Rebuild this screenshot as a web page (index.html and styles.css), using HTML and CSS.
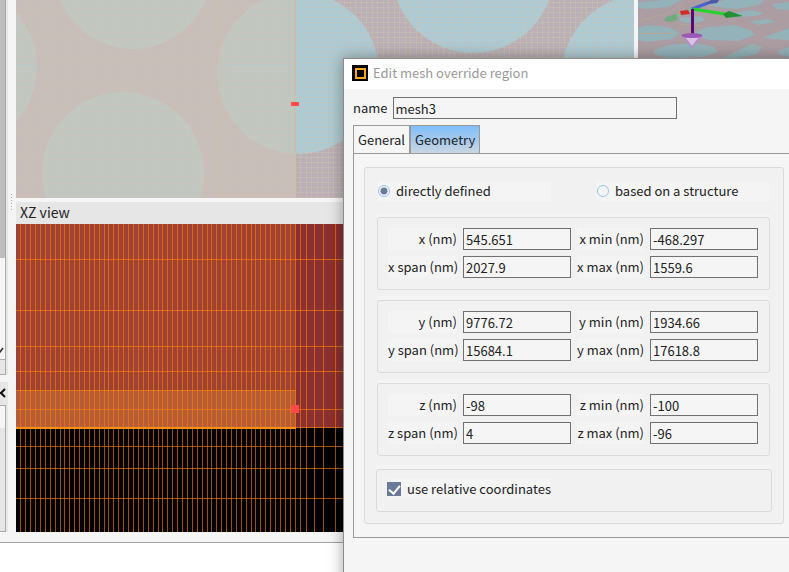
FILE: index.html
```html
<!DOCTYPE html>
<html lang="en">
<head>
<meta charset="utf-8">
<title>Edit mesh override region</title>
<link rel="stylesheet" href="styles.css">
</head>
<body>
<div class="app">
  <main class="workspace">
    <aside class="dock">
      <div class="dock-scroll"></div>
      <div class="dock-list"><svg width="5" height="10" viewBox="0 0 5 10"><path d="M-2 4L0 7L3 3" fill="none" stroke="#222" stroke-width="1.5"/></svg></div>
      <div class="dock-corner"></div>
      <div class="dock-title"><svg width="6" height="10" viewBox="0 0 6 10"><path d="M5 1L1 5L5 9M1 5L-2 5" fill="none" stroke="#111" stroke-width="2"/></svg></div>
      <div class="dock-field"></div>
      <div class="dock-body"></div>
    </aside>
    <div class="splitter"><span class="grip"></span></div>
    <section class="views">
      <div class="view-top">
        <svg class="scene" aria-label="XY view">
          <defs>
            <pattern id="fine" width="10" height="12" patternUnits="userSpaceOnUse">
              <path d="M4.500 0V12M9.500 0V12M0 3.500H10M0 8.500H10" stroke="#ccc0b4" stroke-opacity=".35"/>
            </pattern>
            <pattern id="coarse" width="11" height="5" patternUnits="userSpaceOnUse">
              <path d="M4.500 0V5M9.500 0V5M0 2.500H11" stroke="#cbc2ae" stroke-opacity=".5"/>
            </pattern>
            <clipPath id="meshed"><rect width="280" height="198"/></clipPath>
            <clipPath id="open"><rect x="280" width="2000" height="198"/></clipPath>
            <g id="discs">
              <circle cx="117" cy="-29" r="78"/><circle cx="107" cy="173" r="81"/>
              <circle cx="-60" cy="67" r="81"/><circle cx="282" cy="73" r="81"/>
              <circle cx="457" cy="-28" r="81"/><circle cx="629" cy="78" r="84"/>
            </g>
          </defs>
          <rect width="100%" height="100%" fill="#bbb0b6"/>
          <rect width="280" height="198" fill="#c7beb9"/>
          <use href="#discs" fill="#c1c8c1" clip-path="url(#meshed)"/>
          <use href="#discs" fill="#abcbd6" clip-path="url(#open)"/>
          <rect width="280" height="198" fill="url(#fine)"/>
          <rect x="280" width="100%" height="100%" fill="url(#coarse)"/>
          <path d="M279 0V198" stroke="#cbc0ae" stroke-width="2"/>
          <path d="M205.500 0V198" stroke="#cbc1ae" stroke-opacity=".5" stroke-width="2"/>
          <path d="M0 64.500H21M212 64.500H276" stroke="#b0c7cd" stroke-opacity=".7"/>
          <rect x="275" y="102" width="8" height="4" fill="#ff4a4a"/>
        </svg>
      </div>
      <h2 class="view-title">XZ view</h2>
      <div class="view-xz">
        <svg class="scene" aria-label="XZ view">
          <rect width="100%" height="100%" fill="#000"/>
          <rect width="100%" height="204" fill="#8b3031"/>
          <rect width="280" height="204" fill="#9f4234"/>
          <rect y="166" width="280" height="38" fill="#b65c37"/>
          <path stroke="#ff8000" stroke-opacity=".62" d="M4.500 0v308m5-308v308m5-308v308m5-308v308m5-308v308m5-308v308m5-308v308m5-308v308m5-308v308m4-308v308m5-308v308m5-308v308m5-308v308m5-308v308m5-308v308m5-308v308m5-308v308m5-308v308m4-308v308m5-308v308m5-308v308m5-308v308m5-308v308m5-308v308m5-308v308m5-308v308m5-308v308m5-308v308m5-308v308m4-308v308m5-308v308m5-308v308m5-308v308m5-308v308m5-308v308m5-308v308m5-308v308m5-308v308m5-308v308m4-308v308m5-308v308m5-308v308m5-308v308m5-308v308m5-308v308m5-308v308m5-308v308m5-308v308m4-308v308m5-308v308m5-308v308m5-308v308m5-308v308m5-308v308m5-308v308m5-308v308m5-308v308m5-308v308m6-308v308m8-308v308m9-308v308m12-308v308"/>
          <path stroke="#ff8000" stroke-opacity=".65" d="M0 35.500h800M0 86.500h800M0 122.500h800M0 147.500h800M0 166.500h280M0 185.500h800M0 203.500h800M0 222.500h800M0 244.500h800M0 274.500h800"/>
          <path d="M0 204H280" stroke="#ff9010" stroke-width="2"/>
          <rect x="275" y="181" width="8" height="8" fill="#ff4848"/>
        </svg>
      </div>
    </section>
    <section class="perspective">
      <svg class="scene" aria-label="Perspective view">
        <rect width="100%" height="100%" fill="#ab9da2"/>
        <g fill="#94b2b9">
          <path d="M0 2L26 0H44L30 7L8 9L0 8ZM0 28L10 25L30 27L42 33L34 39L8 42L0 40ZM57 32L70 27L96 25L112 30L117 35L100 41L72 40L58 37ZM70 6L86 0H126L122 5L98 9ZM96 13L112 10L126 13L118 16L100 17ZM124 38L151 28V40ZM15 51L30 45L56 43L76 47L80 52L64 57L30 58L18 55ZM84 58L114 44L124 47L119 54L100 58ZM140 51L151 47V57L142 55ZM40 18L62 16L68 20L55 24L44 22ZM134 4L151 2V10L138 9ZM112 21L130 19L139 22L120 25Z"/>
        </g>
        <path d="M0 21L28 14L46 3M0 33.500H36M40 24L66 26" stroke="#b5a696" fill="none"/>
        <path d="M28 17L38 14L40 19L34 22L26 21Z" fill="#70aa7e"/>
        <path d="M39 16L54 9" stroke="#7fc486" stroke-width="2"/>
        <path d="M42 11L50 10L52 14L43 15Z" fill="#d32a2a"/>
        <path d="M54 9L70 3" stroke="#4964d0" stroke-width="3"/>
        <path d="M68 3L73 0H81L79 3L71 4Z" fill="#4859ae"/>
        <path d="M55 9L86 14" stroke="#22d52a" stroke-width="3"/>
        <path d="M85 14L91 11L105 16L88 18Z" fill="#219332"/>
        <path d="M54.500 9V36" stroke="#5b086f" stroke-width="3"/>
        <path d="M44 36L54 48L65 36Z" fill="#b98acb"/>
        <path d="M48 38L54 46L60 38Z" fill="#dcc4e6"/>
        <ellipse cx="54" cy="35.500" rx="10.500" ry="2.500" fill="#9a5ab6"/>
      </svg>
    </section>
  </main>
  <footer class="output"></footer>
</div>

<div class="dialog" role="dialog" aria-labelledby="dialog-title">
  <header class="titlebar">
    <svg width="16" height="16" viewBox="0 0 16 16"><rect width="16" height="16"/><rect x="4" y="4" width="9" height="9" fill="#000" stroke="#f5a81c" stroke-width="2"/></svg>
    <h1 id="dialog-title">Edit mesh override region</h1>
  </header>
  <form class="form">
    <div class="name-row">
      <label for="name">name</label>
      <input class="field" id="name" type="text" value="mesh3">
    </div>
    <div class="tabs" role="tablist">
      <button class="tab" type="button" role="tab" aria-selected="false">General</button>
      <button class="tab tab-active" type="button" role="tab" aria-selected="true">Geometry</button>
    </div>
    <div class="page" role="tabpanel">
      <div class="group">
        <div class="modes">
          <label class="option"><input type="radio" name="mode" checked>directly defined</label>
          <label class="option"><input type="radio" name="mode">based on a structure</label>
        </div>
        <div class="axes">
          <div class="axis">
            <label for="x">x (nm)</label><input class="field" id="x" type="text" value="545.651">
            <label for="xmin">x min (nm)</label><input class="field" id="xmin" type="text" value="-468.297">
            <label for="xspan">x span (nm)</label><input class="field" id="xspan" type="text" value="2027.9">
            <label for="xmax">x max (nm)</label><input class="field" id="xmax" type="text" value="1559.6">
          </div>
          <div class="axis">
            <label for="y">y (nm)</label><input class="field" id="y" type="text" value="9776.72">
            <label for="ymin">y min (nm)</label><input class="field" id="ymin" type="text" value="1934.66">
            <label for="yspan">y span (nm)</label><input class="field" id="yspan" type="text" value="15684.1">
            <label for="ymax">y max (nm)</label><input class="field" id="ymax" type="text" value="17618.8">
          </div>
          <div class="axis">
            <label for="z">z (nm)</label><input class="field" id="z" type="text" value="-98">
            <label for="zmin">z min (nm)</label><input class="field" id="zmin" type="text" value="-100">
            <label for="zspan">z span (nm)</label><input class="field" id="zspan" type="text" value="4">
            <label for="zmax">z max (nm)</label><input class="field" id="zmax" type="text" value="-96">
          </div>
        </div>
        <div class="relative">
          <label class="check"><input type="checkbox" checked>use relative coordinates</label>
        </div>
      </div>
    </div>
  </form>
</div>
</body>
</html>
```
FILE: styles.css
```css
* { box-sizing: border-box; }

html, body { height: 100%; }

body {
  margin: 0;
  overflow: hidden;
  background: #fff;
  color: #222;
  font: 13px/20px "Noto Sans CJK SC", "Noto Sans", sans-serif;
}

h1, h2 { margin: 0; font-weight: 400; }

.app { display: flex; flex-direction: column; height: 100%; }

.workspace {
  display: flex;
  flex: 1;
  min-height: 0;
  padding-bottom: 10px;
  background: #f5f5f5;
  border-bottom: 1px solid #a0a0a0;
}

.output { height: 29px; background: #fff; }

/* Docked panel, cut off by the window's left edge */
.dock {
  display: flex;
  flex-direction: column;
  width: 8px;
  background: #e6e6e6;
}
.dock > div { border-right: 1px solid #aaa; margin-right: 2px; }
.dock svg { display: block; }
.dock-scroll { height: 258px; background: #bdbdbd; }
.dock-list { height: 101px; padding-top: 87px; background: #f5f5f5; }
.dock-corner { height: 16px; border-top: 1px solid #aaa; border-bottom: 1px solid #aaa; }
.dock > .dock-title {
  height: 30px;
  margin-right: 0;
  padding-top: 6px;
  border-right: 0;
  border-top: 7px solid #f5f5f5;
}
.dock-field { height: 23px; border-top: 1px solid #aaa; background: #f5f5f5; }
.dock-body { flex: 1; border-bottom: 1px solid #aaa; }

.splitter { width: 8px; padding: 194px 0 0 3px; }
.grip {
  display: block;
  width: 1px;
  height: 17px;
  background: repeating-linear-gradient(#aaa 0 1px, transparent 1px 3px);
}

.views { display: flex; flex: 1; flex-direction: column; min-width: 0; }
.view-top { height: 198px; margin-bottom: 4px; }
.view-title {
  height: 22px;
  padding-left: 4px;
  background: #e6e6e6;
  font-size: 14px;
  line-height: 20px;
}
.view-xz { flex: 1; min-height: 0; }
.perspective { width: 151px; margin-left: 4px; }
.scene { display: block; width: 100%; height: 100%; overflow: hidden; }

/* The dialog floats over the workspace and runs past the window's edge */
.dialog {
  position: absolute;
  top: 58px;
  right: -10px;
  bottom: -20px;
  left: 343px;
  background: #f5f5f5;
  border: 1px solid #8b8d8d;
  box-shadow: 0 0 14px rgba(0, 0, 0, .35);
}

.titlebar {
  display: flex;
  align-items: center;
  gap: 5px;
  height: 30px;
  padding: 0 0 2px 8px;
  background: #fff;
  color: #999;
}
.titlebar h1 { font-size: 13px; }

.form { padding: 8px 4px 0 9px; }

.name-row { display: flex; align-items: center; gap: 5px; }
.name-row .field { width: 284px; }

.field {
  width: 100%;
  height: 22px;
  padding: 0 2px;
  border: 1px solid #707070;
  background: #f5f5f5;
  color: #222;
  font: inherit;
}

.tabs { display: flex; margin-top: 6px; }
.tab {
  height: 28px;
  padding: 0 4px;
  border: 1px solid #999;
  border-bottom: 0;
  background: #f5f5f5;
  color: #222;
  font: inherit;
}
.tab-active { background: linear-gradient(#80bffb, #c9d5e1); }

.page {
  padding: 13px 9px 13px 10px;
  border: 1px solid #999;
}

.group, .axis, .relative {
  border: 1px solid #dadada;
  border-radius: 3px;
  background: #f1f1f1;
}
.group { padding: 13px 11px 11px; }

.modes {
  display: grid;
  grid-template-columns: 173px 172px;
  justify-content: space-between;
  padding: 0 3px 0 2px;
}
.option, .check { display: flex; align-items: center; gap: 6px; }
.option { background: #f4f4f4; }

input[type="radio"] {
  appearance: none;
  width: 12px;
  height: 12px;
  margin: 0;
  border: 1px solid #90c8f5;
  border-radius: 50%;
  background: #f5f5f5;
}
input[type="radio"]:checked {
  background: radial-gradient(circle, #6b7a99 0 3px, #f5f5f5 4px);
}

.axes { display: grid; gap: 10px; padding: 16px 2px 13px 1px; }
.axis {
  display: grid;
  grid-template-columns: 69px 1fr 67px 1fr;
  gap: 6px;
  padding: 10px 11px 11px 10px;
  box-shadow: 0 -4px 0 #f4f4f4;
}
.axis label { background: #f4f4f4; line-height: 22px; text-align: right; white-space: nowrap; }

.relative { padding: 9px 10px 12px; box-shadow: 0 -4px 0 #f4f4f4; }
.check { width: max-content; background: #f4f4f4; }

input[type="checkbox"] {
  appearance: none;
  display: grid;
  place-items: center;
  width: 14px;
  height: 14px;
  margin: 0;
  background: #6b7a99;
}
input[type="checkbox"]:checked::after {
  content: "";
  width: 5px;
  height: 9px;
  margin-bottom: 2px;
  border: solid #fff;
  border-width: 0 2px 2px 0;
  transform: rotate(40deg);
}
```
